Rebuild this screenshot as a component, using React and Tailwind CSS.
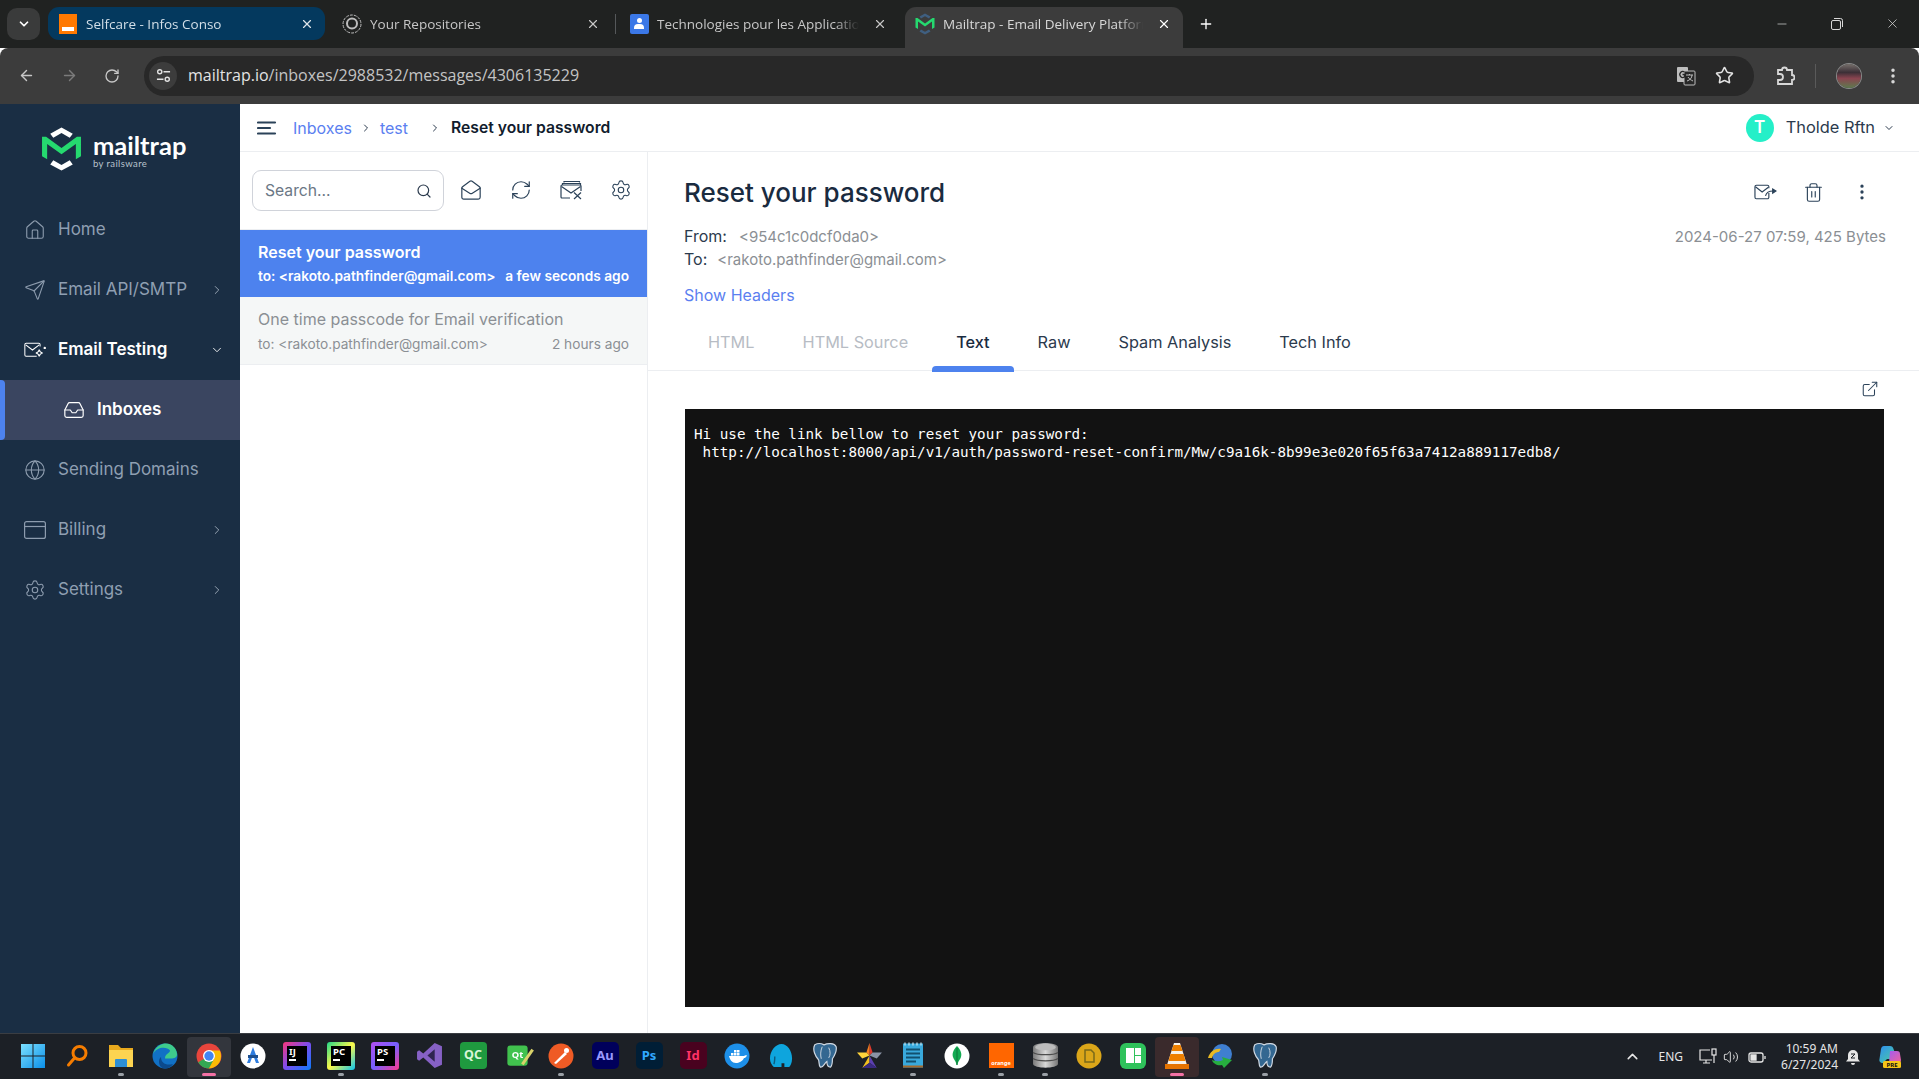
import {
  ArrowLeft,
  ArrowRight,
  ChevronDown,
  ChevronRight,
  EllipsisVertical,
  ExternalLink,
  Globe,
  House,
  Inbox,
  MailOpen,
  Minus,
  Plus,
  RefreshCw,
  RotateCw,
  Search,
  Send,
  Settings,
  Star,
  Trash2,
  X,
  ChevronUp,
  Volume2,
} from "lucide-react";

const navy = "#2b4259";

function LogoMark({ className, caps = "#fff" }) {
  return (
    <svg viewBox="0 0 40 44" className={className}>
      <path d="M20 1 31 7 28 11 20 6.5 12 11 9 7Z" fill={caps} />
      <path d="M20 43 9 37 12 33 20 37.5 28 33 31 37Z" fill={caps} />
      <path d="M1 10 5 10 20 21 35 10 39 10 39 29 34 32 34 17 20 27 6 17 6 32 1 29Z" fill="#25d96f" />
    </svg>
  );
}

function MailSpark() {
  return (
    <svg viewBox="0 0 26 18" className="w-[26px] h-[18px]" fill="none" stroke="#fff" strokeWidth="1.2">
      <path d="M15 16.5H2.5A1.5 1.5 0 0 1 1 15V2.5A1.5 1.5 0 0 1 2.5 1h15A1.5 1.5 0 0 1 19 2.5V5" />
      <path d="M2 3l8 6 8-6" />
      <path d="M18 8.5c.5 2.5 1.5 3.5 4 4-2.5.5-3.5 1.5-4 4-.5-2.5-1.5-3.5-4-4 2.500-.5 3.500-1.500 4-4Z" />
      <circle cx="24.500" cy="6.500" r=".8" fill="#fff" />
    </svg>
  );
}

function MailClear() {
  return (
    <svg viewBox="0 0 22 20" className="w-[22px] h-[20px]" fill="none" stroke={navy} strokeWidth="1.200">
      <path d="M4 2.500V1.500h15.500v1M2.500 5V3.500h18V5" />
      <path d="M10 18H2a1 1 0 0 1-1-1V6a1 1 0 0 1 1-1h18a1 1 0 0 1 1 1v5" />
      <path d="M1.500 6.500 11 13l9.500-6.500M14 12.500l7 6.500M21 12.500 14 19" />
    </svg>
  );
}

function MailForward() {
  return (
    <svg viewBox="0 0 24 16" className="w-[23px] h-[16px]" fill="none" stroke={navy} strokeWidth="1.200">
      <path d="M15.500 9v4.500a1.500 1.500 0 0 1-1.500 1.500H2.500A1.500 1.500 0 0 1 1 13.500v-11A1.500 1.500 0 0 1 2.500 1H14a1.500 1.500 0 0 1 1.500 1.500V4" />
      <path d="m1.500 2.500 7 5.500 6.500-5" />
      <path d="M12 12c.8-3 3.500-5 8-5" />
      <path d="m19.500 4.800 3.500 2.200-3.500 2.200Z" fill={navy} />
    </svg>
  );
}

function CardIcon() {
  return (
    <svg viewBox="0 0 22 18" className="w-[22px] h-[18px]" fill="none" stroke="#8d9cae" strokeWidth="1.200">
      <rect x=".6" y=".6" width="20.800" height="16.800" rx="2" />
      <path d="M.6 5.500h20.800" />
    </svg>
  );
}

function NavItem({ icon, label, chevron, active, sub }) {
  return (
    <div className={`relative flex h-[60px] items-center ${sub ? "bg-[#3a4560] pl-[63px]" : "pl-[24px]"}`}>
      {sub && <div className="absolute left-0 top-0 h-full w-[5px] rounded-r bg-[#4d82ee]" />}
      <div className="flex w-[22px] justify-center">{icon}</div>
      <span className={`ml-[12px] text-[17px] ${active ? "font-semibold text-white" : "text-[#8f9fb2]"}`}>{label}</span>
      {chevron === "right" && <ChevronRight className="absolute right-[16px] h-[14px] w-[14px] text-[#a5b1bf]" strokeWidth={1.500} />}
      {chevron === "down" && <ChevronDown className="absolute right-[16px] h-[14px] w-[14px] text-white" strokeWidth={1.500} />}
    </div>
  );
}

function BrowserTab({ icon, title, className, textClass, closeClass }) {
  return (
    <div className={`flex items-center ${className}`}>
      <div className="flex w-[20px] shrink-0 justify-center">{icon}</div>
      <div className={`ml-[8px] mr-[14px] flex-1 overflow-hidden whitespace-nowrap pt-[1px] text-[13.500px] [mask-image:linear-gradient(90deg,#000_88%,transparent)] ${textClass}`}>{title}</div>
      <X className={`h-[14px] w-[14px] shrink-0 ${closeClass}`} strokeWidth={2} />
    </div>
  );
}

function LetterTile({ text, bg, color, extra = "" }) {
  return (
    <div className={`flex h-[27px] w-[27px] items-center justify-center text-[12.500px] font-bold ${extra}`} style={{ background: bg, color }}>
      {text}
    </div>
  );
}

function JetTile({ text, ring }) {
  return (
    <div className="flex h-[28px] w-[28px] items-center justify-center rounded-[3px]" style={{ background: ring }}>
      <div className="h-[20px] w-[20px] bg-black pl-[2px] pt-[1px] text-[9.500px] font-bold leading-[10px] text-white">
        {text}
        <div className="mt-[2px] h-[2px] w-[7px] bg-white" />
      </div>
    </div>
  );
}

function Elephant({ fill = "#336791" }) {
  return (
    <svg viewBox="0 0 28 30" className="h-[28px] w-[26px]">
      <path d="M3 3C8 0 11 2 13 3c4-2 11-2 13 2 1 5-2 10-4 13 0 4-1 8-2 9-2 0-4-2-4-6-3 2-4 7-7 6-2-2-1-6-2-8C4 16 0 8 3 3Z" fill={fill} stroke="#cfd8e2" strokeWidth="1.300" />
      <path d="M11 5c-2 5-2 9-1 13M18 6c2 4 2 8 0 11" fill="none" stroke="#cfd8e2" strokeWidth="1" />
    </svg>
  );
}

const taskbarItems = [
  {
    id: "win",
    icon: (
      <svg viewBox="0 0 24 24" className="h-[24px] w-[24px]">
        <defs>
          <linearGradient id="wg" x1="0" y1="0" x2="1" y2="1">
            <stop offset="0" stopColor="#7ce0ff" />
            <stop offset="1" stopColor="#0a8fe8" />
          </linearGradient>
        </defs>
        <path d="M0 0h11.500v11.500H0zM12.500 0H24v11.500H12.500zM0 12.500h11.500V24H0zM12.500 12.500H24V24H12.500z" fill="url(#wg)" />
      </svg>
    ),
  },
  {
    id: "search",
    icon: (
      <svg viewBox="0 0 24 24" className="h-[24px] w-[24px]" fill="none" stroke="#f57c00" strokeWidth="3">
        <circle cx="14.500" cy="9" r="6.500" />
        <path d="M9.500 14 3.500 21" strokeLinecap="round" />
      </svg>
    ),
  },
  {
    id: "files",
    dot: "grey",
    icon: (
      <svg viewBox="0 0 26 26" className="h-[26px] w-[26px]">
        <path d="M1 2h9l3 3h12v19H1Z" fill="#e8a91d" />
        <path d="M1 7h24v17H1Z" fill="#fcd451" />
        <path d="M8 16h10a1 1 0 0 1 1 1v7H7v-7a1 1 0 0 1 1-1Z" fill="#2d8fd5" />
      </svg>
    ),
  },
  {
    id: "edge",
    icon: (
      <svg viewBox="0 0 26 26" className="h-[26px] w-[26px]">
        <circle cx="13" cy="13" r="12.500" fill="#1171c5" />
        <path d="M1 11C3 3 10 .5 14 .5c7 0 11 6 11 11 0 3-3 4-6 4h-6c0-5 5-5 5-8-3-4-13-4-17 3.500Z" fill="#3ecb8c" />
        <path d="M9 14c0 6 5 9 12 7-2 3-5 4.500-8 4.500-4 0-6-3-6-7 0-2 1-4 2-4.500Z" fill="#0c4a8c" />
      </svg>
    ),
  },
  {
    id: "chrome",
    highlight: "bg-[#33363d]",
    dot: "pink",
    icon: (
      <svg viewBox="0 0 26 26" className="h-[26px] w-[26px]">
        <circle cx="13" cy="13" r="12.500" fill="#e8453c" />
        <path d="M13 13 2.200 19.300A12.500 12.500 0 0 0 13 25.500L19.200 15Z" fill="#34a853" />
        <path d="M13 7.500h10.800A12.500 12.500 0 0 1 13 25.500L19 14Z" fill="#fbbc05" />
        <circle cx="13" cy="13" r="6" fill="#fff" />
        <circle cx="13" cy="13" r="4.700" fill="#4285f4" />
      </svg>
    ),
  },
  {
    id: "studio",
    icon: (
      <svg viewBox="0 0 26 26" className="h-[26px] w-[26px]">
        <circle cx="13" cy="13" r="12.500" fill="#fff" />
        <path d="M13 4 19 20H16L13 12 10 20H7Z" fill="#2d7de0" />
        <path d="M8 12h10v3H8Z" fill="#1c4f8f" />
      </svg>
    ),
  },
  { id: "ij", icon: <JetTile text="IJ" ring="linear-gradient(135deg,#f9367a,#7b4df0,#087cfa)" /> },
  { id: "pc", dot: "grey", icon: <JetTile text="PC" ring="linear-gradient(135deg,#21d789,#fcf84a,#07c3f2)" /> },
  { id: "ps", icon: <JetTile text="PS" ring="linear-gradient(135deg,#b24eee,#7660ff,#fc378c)" /> },
  {
    id: "vs",
    icon: (
      <svg viewBox="0 0 26 26" className="h-[27px] w-[27px]">
        <path d="M18 1 25 4v18l-7 3-11-10-4 3-2-1.500V9.500L3 8l4 3Z" fill="#8661c5" />
        <path d="M18 7v12l-7-6Z" fill="#2f2450" />
      </svg>
    ),
  },
  { id: "qc", icon: <LetterTile text="QC" bg="#1f9a3f" color="#d8f5d8" extra="rounded-[4px]" /> },
  {
    id: "qt",
    icon: (
      <div className="relative">
        <LetterTile text="Qt" bg="#41c24e" color="#fff" extra="rounded-[4px] scale-75" />
        <div className="absolute bottom-[3px] right-[2px] h-[18px] w-[3px] rotate-[35deg] bg-[#d9d26a]" />
      </div>
    ),
  },
  {
    id: "postman",
    dot: "grey",
    icon: (
      <svg viewBox="0 0 26 26" className="h-[26px] w-[26px]">
        <circle cx="13" cy="13" r="12.500" fill="#ef5b25" />
        <path d="M6 20 17 9l2 2L8 21Z" fill="#fff" />
        <circle cx="18.500" cy="7.500" r="2.500" fill="#fff" />
      </svg>
    ),
  },
  { id: "au", icon: <LetterTile text="Au" bg="#00005b" color="#9999ff" extra="rounded-[5px] text-[13px]" /> },
  { id: "pshop", icon: <LetterTile text="Ps" bg="#001e36" color="#31a8ff" extra="rounded-[5px] text-[13px]" /> },
  { id: "id", icon: <LetterTile text="Id" bg="#49021f" color="#ff3366" extra="rounded-[5px] text-[13px]" /> },
  {
    id: "docker",
    icon: (
      <svg viewBox="0 0 26 26" className="h-[26px] w-[26px]">
        <circle cx="13" cy="13" r="12.500" fill="#1d8fe8" />
        <path d="M5 13h15c1-1 2-1 3-.5-1 2-2 2.500-3 2.500-1.500 3.500-5 5-8 5-4 0-6-3-7-7Z" fill="#fff" />
        <path d="M7 10h2.500v2.500H7zM10 10h2.500v2.500H10zM13 10h2.500v2.500H13zM10 7h2.500v2.500H10zM13 7h2.500v2.500H13z" fill="#fff" />
      </svg>
    ),
  },
  {
    id: "mamp",
    icon: (
      <svg viewBox="0 0 26 26" className="h-[27px] w-[25px]">
        <path d="M13 1c6 0 11 7 11 15 0 5-2 8-3 9h-5v-4h-3v4H5c-2-2-4-5-4-9C1 8 7 1 13 1Z" fill="#0ea5dd" />
        <path d="M6 14c0 3 0 6-1 8" fill="none" stroke="#0b5d80" strokeWidth="1.500" />
      </svg>
    ),
  },
  { id: "pg1", icon: <Elephant /> },
  {
    id: "star",
    icon: (
      <svg viewBox="0 0 26 26" className="h-[27px] w-[27px]">
        <path d="M13 1 16 10 13 13Z" fill="#e0392d" />
        <path d="M13 1 10 10 13 13Z" fill="#f57e20" />
        <path d="M1 10H10L13 13 6 16Z" fill="#ffd43b" />
        <path d="M25 10H16L13 13 20 16Z" fill="#8a93a5" />
        <path d="M6 25 13 13V20Z" fill="#f2c01e" />
        <path d="M20 25 13 13V20Z" fill="#5b3fb0" />
        <path d="M6 25 13 20 20 25Z" fill="#3a2a80" />
      </svg>
    ),
  },
  {
    id: "notes",
    dot: "grey",
    icon: (
      <svg viewBox="0 0 22 26" className="h-[27px] w-[22px]">
        <rect x="1" y="1" width="20" height="24" fill="#39a9dc" />
        <rect x="1" y="23" width="20" height="2" fill="#a66a2c" />
        <path d="M4 7h14M4 11h14M4 15h14M4 19h10" stroke="#12506f" strokeWidth="2" />
        <path d="M3 0v3M7 0v3M11 0v3M15 0v3M19 0v3" stroke="#c7e8f6" strokeWidth="1.200" />
      </svg>
    ),
  },
  {
    id: "mongo",
    icon: (
      <svg viewBox="0 0 26 26" className="h-[26px] w-[26px]">
        <circle cx="13" cy="13" r="12.500" fill="#fff" />
        <path d="M13 3c4 4 5 8 4 11-1 3-3 4-3.500 8h-1C12 18 10 17 9 14 8 11 9 7 13 3Z" fill="#13aa52" />
        <path d="M13 5v17" stroke="#0a6b33" strokeWidth=".8" />
      </svg>
    ),
  },
  {
    id: "orange",
    dot: "grey",
    icon: (
      <div className="flex h-[25px] w-[25px] flex-col justify-end bg-[#ff6600] pb-[2px] text-center text-[5.500px] font-bold leading-none text-white">
        orange
      </div>
    ),
  },
  {
    id: "db",
    dot: "grey",
    icon: (
      <svg viewBox="0 0 26 26" className="h-[27px] w-[27px]">
        <defs>
          <linearGradient id="dbg" x1="0" x2="1">
            <stop offset="0" stopColor="#7b7b7b" />
            <stop offset=".5" stopColor="#d8d8d8" />
            <stop offset="1" stopColor="#777" />
          </linearGradient>
        </defs>
        <path d="M1 5c0-5 24-5 24 0v16c0 5-24 5-24 0Z" fill="url(#dbg)" />
        <path d="M1 10c4 3 20 3 24 0M1 16c4 3 20 3 24 0" fill="none" stroke="#4d4d4d" strokeWidth="1.200" />
        <ellipse cx="13" cy="5" rx="10" ry="3" fill="#bcbcbc" />
      </svg>
    ),
  },
  {
    id: "gold",
    icon: (
      <svg viewBox="0 0 26 26" className="h-[26px] w-[26px]">
        <circle cx="13" cy="13" r="12.500" fill="#dba619" />
        <path d="M9 7h6l3 3v9H9Z" fill="none" stroke="#7a6a1a" strokeWidth="1.500" />
      </svg>
    ),
  },
  {
    id: "green",
    icon: (
      <div className="flex h-[26px] w-[26px] items-center justify-center gap-[1px] rounded-[6px] bg-[#2fc25b]">
        <div className="h-[15px] w-[8px] bg-white" />
        <div className="flex flex-col gap-[1px]">
          <div className="h-[7px] w-[6px] bg-white" />
          <div className="h-[7px] w-[6px] bg-white" />
        </div>
      </div>
    ),
  },
  {
    id: "vlc",
    highlight: "bg-[#3a2a2c]",
    dot: "pink",
    icon: (
      <svg viewBox="0 0 26 28" className="h-[28px] w-[26px]">
        <path d="M10 1h6l7 22H3Z" fill="#f6f1e8" />
        <path d="M9.500 3h7l2 6h-11ZM6.500 12h13l2 7h-17Z" fill="#ee7f00" />
        <path d="M1 22h24v5H1Z" fill="#e67300" />
      </svg>
    ),
  },
  {
    id: "idm",
    icon: (
      <svg viewBox="0 0 28 26" className="h-[26px] w-[28px]">
        <circle cx="15" cy="11" r="10" fill="#3f7fd0" />
        <path d="M1 15c2-7 8-10 13-9l-2 3c-3 0-6 2-7 6Z" fill="#e8b923" />
        <path d="M5 17c1 4 6 6 10 5l2 3 8-8-10-3 1 3c-4 2-8 1-11 0Z" fill="#27ae3f" />
      </svg>
    ),
  },
  { id: "pg2", dot: "grey", icon: <Elephant /> },
];

function TaskbarTile({ item }) {
  return (
    <div className={`flex h-[40px] w-[44px] flex-col items-center justify-end rounded-[4px] ${item.highlight || ""}`}>
      <div className="flex h-[30px] items-center justify-center">{item.icon}</div>
      <div
        className={`mb-[1px] mt-[2px] h-[3px] rounded-full ${
          item.dot === "pink" ? "w-[14px] bg-[#f472a6]" : item.dot === "grey" ? "w-[6px] bg-[#9aa0a6]" : "w-[6px]"
        }`}
      />
    </div>
  );
}

export default function App() {
  return (
    <div className="flex h-screen w-full flex-col overflow-hidden bg-white font-['Inter',sans-serif]">
      {/* tab strip */}
      <div className="flex h-[48px] shrink-0 items-start bg-[#202221] font-['Open_Sans',sans-serif]">
        <div className="ml-[7px] mt-[8px] flex h-[32px] w-[33px] items-center justify-center rounded-[10px] bg-[#3a3b3b]">
          <ChevronDown className="h-[14px] w-[14px] text-white" strokeWidth={3} />
        </div>
        <BrowserTab
          className="ml-[8px] mt-[7px] h-[33px] w-[277px] rounded-[11px] bg-[#04395e] pl-[10px] pr-[11px]"
          icon={<div className="flex h-[20px] w-[18px] flex-col justify-end bg-[#ff7900] pb-[3px]"><div className="mx-[3px] h-[4px] bg-white" /></div>}
          title="Selfcare - Infos Conso"
          textClass="text-[#d3dfe8]"
          closeClass="text-[#dde5ea]"
        />
        <BrowserTab
          className="ml-[8px] mt-[7px] h-[33px] w-[282px] pl-[9px] pr-[15px]"
          icon={
            <svg viewBox="0 0 20 20" className="h-[20px] w-[20px]" fill="none" stroke="#bdbdbd">
              <circle cx="10" cy="10" r="9" strokeDasharray="3 1" />
              <circle cx="10" cy="9.500" r="5" strokeWidth="2" />
            </svg>
          }
          title="Your Repositories"
          textClass="text-[#c7c7c7]"
          closeClass="text-[#c7c7c7]"
        />
        <div className="mt-[14px] h-[20px] w-px bg-[#55585a]" />
        <BrowserTab
          className="mt-[7px] h-[33px] w-[281px] pl-[13px] pr-[10px]"
          icon={
            <div className="flex h-[20px] w-[19px] flex-col items-center justify-center rounded-[2px] bg-[#3b78e7]">
              <div className="h-[5px] w-[5px] rounded-full bg-white" />
              <div className="mt-[1px] h-[5px] w-[10px] rounded-t bg-white" />
            </div>
          }
          title="Technologies pour les Applications"
          textClass="text-[#c7c7c7]"
          closeClass="text-[#c7c7c7]"
        />
        <BrowserTab
          className="ml-[8px] mt-[7px] h-[41px] w-[278px] rounded-t-[11px] bg-[#3c3c3c] pb-[7px] pl-[10px] pr-[12px]"
          icon={<LogoMark className="h-[22px] w-[20px]" caps="#3f5f80" />}
          title="Mailtrap - Email Delivery Platform"
          textClass="text-[#d8d8d8]"
          closeClass="text-white"
        />
        <Plus className="ml-[15px] mt-[16px] h-[16px] w-[16px] text-white" strokeWidth={2} />
        <div className="ml-auto mr-[19px] mt-[16px] flex items-center gap-[41px] text-[#d8d8d8]">
          <Minus className="h-[14px] w-[14px]" strokeWidth={1.200} />
          <svg viewBox="0 0 14 14" className="h-[14px] w-[14px]" fill="none" stroke="currentColor">
            <rect x="1.500" y="3.500" width="9" height="9" rx="1.500" />
            <path d="M4 1.500h6.500a2 2 0 0 1 2 2V10" />
          </svg>
          <X className="h-[15px] w-[15px]" strokeWidth={1.200} />
        </div>
      </div>

      {/* toolbar */}
      <div className="flex h-[56px] shrink-0 items-center rounded-t-[8px] bg-[#3c3c3c] pb-[1px]">
        <ArrowLeft className="ml-[18px] h-[17px] w-[17px] text-[#c7c7c7]" strokeWidth={2} />
        <ArrowRight className="ml-[26px] h-[17px] w-[17px] text-[#7b7b7b]" strokeWidth={2} />
        <RotateCw className="ml-[26px] h-[16px] w-[16px] text-[#c7c7c7]" strokeWidth={2} />
        <div className="ml-[24px] flex h-[40px] w-[1610px] items-center rounded-full bg-[#282828] pl-[5px] pr-[20px]">
          <div className="flex h-[28px] w-[28px] items-center justify-center rounded-full bg-[#3c3c3c]">
            <svg viewBox="0 0 16 16" className="h-[15px] w-[15px]" fill="none" stroke="#e3e3e3" strokeWidth="1.500">
              <circle cx="4" cy="4" r="2.200" />
              <path d="M8 4h7M1 12h7" />
              <circle cx="12" cy="12" r="2.200" />
            </svg>
          </div>
          <span className="ml-[11px] pb-[1px] font-['Open_Sans',sans-serif] text-[16px] text-[#e3e3e3]">
            mailtrap.io<span className="text-[#c4c4c4]">/inboxes/2988532/messages/4306135229</span>
          </span>
          <div className="ml-auto flex items-center gap-[19px]">
            <svg viewBox="0 0 20 20" className="h-[20px] w-[20px]">
              <rect x="1" y="1" width="11" height="15" rx="1" fill="#bdbdbd" />
              <rect x="8" y="5" width="11" height="14" rx="1" fill="#282828" stroke="#bdbdbd" />
              <path d="M10 9h7M13.500 8v1M11 15c3-1 5-3 5-6M12 11c1 2 3 3 5 4" fill="none" stroke="#bdbdbd" />
              <path d="M8.500 6a3 3 0 1 0 0 5V8.500H6.500" fill="none" stroke="#282828" strokeWidth="1.300" />
            </svg>
            <Star className="h-[19px] w-[19px] text-[#e3e3e3]" strokeWidth={2} />
          </div>
        </div>
        <svg viewBox="0 0 20 20" className="ml-[21px] h-[20px] w-[20px]" fill="none" stroke="#d8d8d8" strokeWidth="1.800">
          <path d="M3 4h4a2.500 2.500 0 0 1 5 0h5v5a2.500 2.500 0 0 1 0 5v4H3v-4h2a2 2 0 0 0 0-6H3Z" />
        </svg>
        <div className="ml-[20px] h-[24px] w-px bg-[#5a5a5a]" />
        <div className="ml-[21px] h-[24px] w-[24px] rounded-full bg-[linear-gradient(180deg,#77706c_0%,#3b2f36_35%,#8a4450_60%,#5d7a4e_100%)] ring-1 ring-[#8a8a8a]" />
        <EllipsisVertical className="ml-[22px] h-[20px] w-[20px] text-[#d8d8d8]" strokeWidth={2.200} />
      </div>

      {/* page */}
      <div className="flex min-h-0 flex-1">
        <aside className="w-[240px] shrink-0 bg-[#1a2e44]">
          <div className="flex h-[96px] items-start pl-[41px] pt-[22px]">
            <LogoMark className="h-[46px] w-[41px]" />
            <div className="ml-[11px] mt-[7px]">
              <div className="font-['Lato',sans-serif] text-[25.500px] font-bold leading-[25px] text-white">mailtrap</div>
              <div className="font-['Lato',sans-serif] text-[9.500px] leading-[12px] tracking-[0.4px] text-[#b8c2cd]">by railsware</div>
            </div>
          </div>
          <NavItem icon={<House className="h-[22px] w-[22px] text-[#8d9cae]" strokeWidth={1.200} />} label="Home" />
          <NavItem icon={<Send className="h-[22px] w-[22px] text-[#8d9cae]" strokeWidth={1.200} />} label="Email API/SMTP" chevron="right" />
          <NavItem icon={<MailSpark />} label="Email Testing" chevron="down" active />
          <NavItem icon={<Inbox className="h-[22px] w-[22px] text-white" strokeWidth={1.300} />} label="Inboxes" active sub />
          <NavItem icon={<Globe className="h-[22px] w-[22px] text-[#8d9cae]" strokeWidth={1.200} />} label="Sending Domains" />
          <NavItem icon={<CardIcon />} label="Billing" chevron="right" />
          <NavItem icon={<Settings className="h-[22px] w-[22px] text-[#8d9cae]" strokeWidth={1.200} />} label="Settings" chevron="right" />
        </aside>

        <main className="flex min-w-0 flex-1 flex-col">
          <header className="flex h-[48px] shrink-0 items-center border-b border-[#eceef1] pl-[17px] pr-[24px]">
            <svg viewBox="0 0 20 14" className="h-[14px] w-[20px]" stroke={navy} strokeWidth="2.200" strokeLinecap="round">
              <path d="M1 1.500h17M1 7h12M1 12.500h17" />
            </svg>
            <span className="ml-[16px] text-[16px] text-[#5b7ff0]">Inboxes</span>
            <ChevronRight className="ml-[8px] h-[12px] w-[12px] text-[#2b3a4d]" strokeWidth={2} />
            <span className="ml-[8px] text-[16px] text-[#5b7ff0]">test</span>
            <ChevronRight className="ml-[21px] h-[12px] w-[12px] text-[#2b3a4d]" strokeWidth={2} />
            <span className="ml-[10px] text-[15.700px] font-semibold text-[#111c2d]">Reset your password</span>
            <div className="ml-auto flex items-center">
              <div className="flex h-[28px] w-[28px] items-center justify-center rounded-full bg-[#25efc8] text-[17px] font-semibold text-white">T</div>
              <span className="ml-[12px] text-[16.400px] text-[#2b3a4d]">Tholde Rftn</span>
              <ChevronDown className="ml-[8px] h-[12px] w-[12px] text-[#2b3a4d]" strokeWidth={2} />
            </div>
          </header>

          <div className="flex min-h-0 flex-1">
            {/* message list */}
            <section className="w-[408px] shrink-0 border-r border-[#eceef1]">
              <div className="flex h-[78px] items-start border-b border-[#eceef1] pl-[12px] pt-[18px]">
                <div className="flex h-[41px] w-[192px] items-center rounded-[9px] border border-[#d0d3da] pl-[12px] pr-[11px]">
                  <span className="text-[15.700px] text-[#6b7785]">Search...</span>
                  <Search className="ml-auto h-[16px] w-[16px] text-[#2b3a4d]" strokeWidth={1.800} />
                </div>
                <div className="ml-[16px] mt-[9px] flex items-center gap-[28px]">
                  <MailOpen className="h-[22px] w-[22px]" color={navy} strokeWidth={1.300} />
                  <RefreshCw className="h-[22px] w-[22px]" color={navy} strokeWidth={1.300} />
                  <MailClear />
                  <Settings className="h-[22px] w-[22px]" color={navy} strokeWidth={1.200} />
                </div>
              </div>
              <div className="flex h-[67px] flex-col justify-center bg-[#4d82ee] px-[18px] text-white">
                <div className="text-[16px] font-semibold leading-[24px]">Reset your password</div>
                <div className="flex justify-between text-[13.700px] font-semibold leading-[24px]">
                  <span>to: &lt;rakoto.pathfinder@gmail.com&gt;</span>
                  <span>a few seconds ago</span>
                </div>
              </div>
              <div className="flex h-[68px] flex-col justify-center border-b border-[#eceef1] bg-[#f5f7f7] px-[18px] text-[#8b8f94]">
                <div className="text-[16px] leading-[26px]">One time passcode for Email verification</div>
                <div className="flex justify-between text-[13.700px] leading-[24px]">
                  <span>to: &lt;rakoto.pathfinder@gmail.com&gt;</span>
                  <span>2 hours ago</span>
                </div>
              </div>
            </section>

            {/* message */}
            <section className="flex min-w-0 flex-1 flex-col">
              <div className="pl-[36px] pr-[35px] pt-[25px]">
                <div className="flex items-center justify-between">
                  <h1 className="text-[26px] font-medium leading-[32px] text-[#1a2b3f]">Reset your password</h1>
                  <div className="mr-[12px] mb-[2px] flex items-center">
                    <MailForward />
                    <Trash2 className="ml-[26px] h-[21px] w-[21px]" color={navy} strokeWidth={1.300} />
                    <EllipsisVertical className="ml-[28px] h-[20px] w-[20px]" color={navy} strokeWidth={2} />
                  </div>
                </div>
                <div className="mt-[16px] flex items-center justify-between text-[16px] leading-[23px]">
                  <div>
                    <span className="text-[#2b3a4d]">From:</span>
                    <span className="ml-[12px] text-[15px] text-[#8b8f94]">&lt;954c1c0dcf0da0&gt;</span>
                  </div>
                  <span className="mr-[-2px] text-[15px] text-[#8b8f94]">2024-06-27 07:59, 425 Bytes</span>
                </div>
                <div className="text-[16px] leading-[23px]">
                  <span className="text-[#2b3a4d]">To:</span>
                  <span className="ml-[10px] text-[15px] text-[#8b8f94]">&lt;rakoto.pathfinder@gmail.com&gt;</span>
                </div>
                <div className="mt-[13px] text-[16px] leading-[23px] text-[#5b7ff0]">Show Headers</div>
              </div>
              <div className="mt-[17px] flex h-[47px] shrink-0 border-b border-[#eceef1] text-[16.300px]">
                <div className="ml-[36px] flex">
                  {[
                    ["HTML", "text-[#b7bcc4]"],
                    ["HTML Source", "text-[#b7bcc4]"],
                    ["Text", "text-[#1a2b3f] font-medium"],
                    ["Raw", "text-[#2b3a4d]"],
                    ["Spam Analysis", "text-[#2b3a4d]"],
                    ["Tech Info", "text-[#2b3a4d]"],
                  ].map(([label, cls]) => (
                    <div key={label} className={`relative h-[47px] px-[24px] pt-[6px] leading-[24px] ${cls}`}>
                      {label}
                      {label === "Text" && <div className="absolute bottom-[-1px] left-0 h-[6px] w-full rounded-t-[4px] bg-[#4d82ee]" />}
                    </div>
                  ))}
                </div>
              </div>
              <div className="flex min-h-0 flex-1 flex-col pl-[37px] pr-[35px]">
                <div className="flex h-[38px] shrink-0 items-center justify-end pb-[2px] pr-[5px]">
                  <ExternalLink className="h-[18px] w-[18px]" color={navy} strokeWidth={1.400} />
                </div>
                <pre className="h-[598px] bg-[#121212] px-[9px] py-[16px] font-['DejaVu_Sans_Mono',monospace] text-[14.250px] leading-[18px] text-white">
                  {"Hi use the link bellow to reset your password:\n http://localhost:8000/api/v1/auth/password-reset-confirm/Mw/c9a16k-8b99e3e020f65f63a7412a889117edb8/"}
                </pre>
              </div>
            </section>
          </div>
        </main>
      </div>

      {/* windows taskbar */}
      <footer className="flex h-[46px] shrink-0 items-center border-t border-[#3a3d42] bg-[#1c2026] pl-[11px] font-['Noto_Sans',sans-serif]">
        {taskbarItems.map((item) => (
          <TaskbarTile key={item.id} item={item} />
        ))}
        <div className="ml-auto flex items-center pr-[17px] text-[#e6e6e6]">
          <ChevronUp className="h-[17px] w-[17px]" strokeWidth={2.200} />
          <span className="ml-[17px] text-[12px]">ENG</span>
          <svg viewBox="0 0 18 18" className="ml-[16px] h-[18px] w-[18px]" fill="none" stroke="currentColor" strokeWidth="1.200">
            <path d="M11 2H1v10h12M4 15h7M7 12v3" />
            <rect x="13" y="1" width="4" height="6" />
            <path d="M15 7v8" />
          </svg>
          <Volume2 className="ml-[6px] h-[16px] w-[16px]" strokeWidth={1.400} />
          <svg viewBox="0 0 18 14" className="ml-[9px] h-[14px] w-[18px]" fill="none" stroke="currentColor" strokeWidth="1.300">
            <rect x="1" y="3" width="14" height="9" rx="2" />
            <path d="M17 6v3" />
            <path d="M3 5h5v5H3Z" fill="currentColor" />
          </svg>
          <div className="ml-[15px] text-right text-[12px] leading-[16px]">
            <div>10:59 AM</div>
            <div>6/27/2024</div>
          </div>
          <svg viewBox="0 0 18 18" className="ml-[6px] h-[18px] w-[18px]" fill="#e6e6e6">
            <path d="M9 2a5 5 0 0 1 5 5v4l2 2.500H2L4 11V7a5 5 0 0 1 5-5ZM7 15h4a2 2 0 0 1-4 0Z" />
            <path d="M7 6h4L7 10h4" stroke="#1c2026" fill="none" />
          </svg>
          <svg viewBox="0 0 24 24" className="ml-[16px] h-[24px] w-[24px]">
            <defs>
              <linearGradient id="copA" x1="0" y1="0" x2="1" y2="1">
                <stop offset="0" stopColor="#2f8ff0" />
                <stop offset="1" stopColor="#4fd39a" />
              </linearGradient>
              <linearGradient id="copB" x1="0" y1="0" x2="1" y2="1">
                <stop offset="0" stopColor="#a45cf0" />
                <stop offset="1" stopColor="#f0649a" />
              </linearGradient>
            </defs>
            <path d="M6 1h6c2 0 3 1 3.500 3L19 14H9L5 18c-3 0-4-2-3.500-4L3 4c.4-2 1.500-3 3-3Z" fill="url(#copA)" />
            <path d="M12 6h7c2 0 3 1 3 3l1 6c0 2-1 3-3 3h-9Z" fill="url(#copB)" />
            <rect x="5" y="16" width="18" height="7" rx="1.500" fill="#f5c518" />
            <text x="14" y="22" textAnchor="middle" fontSize="6" fontWeight="700" fill="#111">PRE</text>
          </svg>
        </div>
      </footer>
    </div>
  );
}
